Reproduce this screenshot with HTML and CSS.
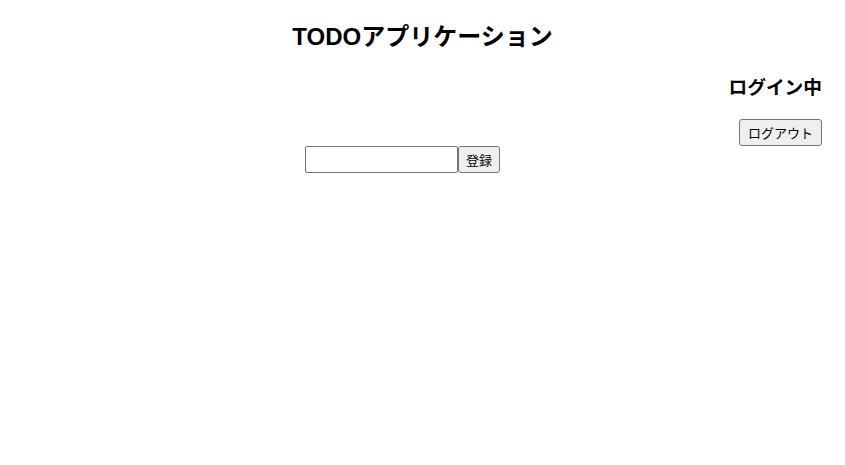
FILE: index.html
```html
<!DOCTYPE html>
<html lang="ja">
<head>
<meta charset="utf-8">
<title>TODOアプリケーション</title>
<link rel="stylesheet" href="styles.css">
</head>
<body>
<h2 class="title">TODOアプリケーション</h2>
<div class="status">
  <h3 class="status-label">ログイン中</h3>
  <div class="logout-row"><button class="btn logout">ログアウト</button></div>
</div>
<form class="todo-form">
  <input class="todo-input" type="text">
  <button class="btn add" type="button">登録</button>
</form>
</body>
</html>
```
FILE: styles.css
```css
html, body {
  background: #ffffff;
}
body {
  margin: 0;
  padding: 0 8px;
  font-family: "Liberation Sans", "Noto Sans CJK JP", sans-serif;
  color: #000000;
}
.title {
  margin: 0;
  padding-top: 20px;
  font-size: 24px;
  line-height: 34px;
  font-weight: bold;
  text-align: center;
}
.status {
  padding-right: 15px;
  text-align: right;
}
.status-label {
  margin: 20px 0 0;
  font-size: 18.72px;
  line-height: 27px;
  font-weight: bold;
}
.logout-row {
  display: flex;
  justify-content: flex-end;
  margin-top: 18px;
}
.btn {
  box-sizing: border-box;
  height: 27px;
  padding: 0 7px;
  font-family: "Liberation Sans", "Noto Sans CJK JP", sans-serif;
  font-size: 13px;
  color: #000000;
  background: #efefef;
  border: 1px solid #767676;
  border-radius: 3px;
}
.logout {
  width: 83px;
}
.todo-form {
  display: flex;
  justify-content: center;
  padding-right: 40px;
  margin-top: 0;
}
.todo-input {
  box-sizing: border-box;
  width: 153px;
  height: 27px;
  margin: 0;
  border: 1px solid #767676;
  border-radius: 2px;
  background: #ffffff;
}
.add {
  width: 42px;
}
```
